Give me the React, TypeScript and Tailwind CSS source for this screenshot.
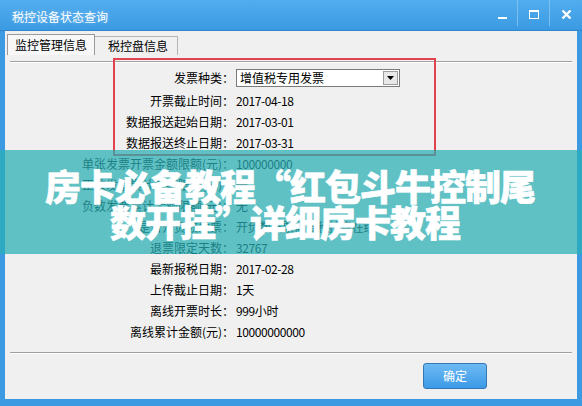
import React from 'react';

const rows: { label: string; value: string }[] = [
  { label: '开票截止时间：', value: '2017-04-18' },
  { label: '数据报送起始日期：', value: '2017-03-01' },
  { label: '数据报送终止日期：', value: '2017-03-31' },
  { label: '单张发票开票金额限额(元)：', value: '100000000' },
  { label: '正数发票累计金额限额(元)：', value: '无' },
  { label: '负数发票累计金额限额(元)：', value: '无' },
  { label: '是否开负数发票：', value: '开负数发票需要税控盘在线' },
  { label: '退票限定天数：', value: '32767' },
  { label: '最新报税日期：', value: '2017-02-28' },
  { label: '上传截止日期：', value: '1天' },
  { label: '离线开票时长：', value: '999小时' },
  { label: '离线累计金额(元)：', value: '10000000000' },
];

const TitleBar = () => (
  <div className="h-[31px] flex items-start bg-gradient-to-b from-[#52adef] to-[#3a9ae2] border-b border-[#2f86cc]">
    <div className="pl-[12px] pt-[9px] text-[12px] leading-[16px] text-white [text-shadow:0_0_4px_rgba(255,255,255,0.35)]">
      税控设备状态查询
    </div>
    <div className="ml-auto flex h-[26px]">
      <div className="w-[34px] flex items-center justify-center pl-[4px]">
        <div className="w-[9px] h-[2px] bg-white mt-[9px]" />
      </div>
      <div className="w-[1px] bg-[#7cc0f2]" />
      <div className="w-[31px] flex items-center justify-center">
        <div className="w-[10px] h-[9px] border border-white border-t-2 mt-[2px]" />
      </div>
      <div className="w-[1px] bg-[#7cc0f2]" />
      <div className="w-[32px] flex items-center justify-center pt-[2px]">
        <svg width="11" height="11" viewBox="0 0 11 11">
          <path d="M1.5 1.5 L9.5 9.5 M9.5 1.5 L1.5 9.5" stroke="white" strokeWidth="2.4" />
        </svg>
      </div>
    </div>
  </div>
);

export default function App() {
  return (
    <div className="relative w-[582px] h-[406px] overflow-hidden flex flex-col bg-[#3b9ae2] font-['Noto_Sans_CJK_SC',sans-serif] text-black">
      <TitleBar />
      <div className="mx-[5px] mb-[7px] flex-1 bg-[#f0f0f0] flex flex-col">
        {/* tabs */}
        <div className="flex pl-[2px] pt-[3px] h-[24px] items-end">
          <div className="h-[21px] w-[88px] bg-[#f7f7f7] border border-b-0 border-[#9a9a9a] flex items-center pl-[7px] text-[12px]">
            监控管理信息
          </div>
          <div className="h-[19px] w-[83px] border-r border-t border-[#b4b4b4] flex items-center pl-[13px] text-[12px]">
            税控盘信息
          </div>
        </div>
        <div className="mx-[5px] mt-[6px] h-[2px] border-t border-[#a0a0a0] border-b border-b-white" />

        {/* fields */}
        <div className="mt-[2px] grid grid-cols-[229px_1fr] text-[12px]">
          <div className="h-[25px] flex items-center justify-end">发票种类：</div>
          <div className="h-[25px] flex items-center pl-[2px]">
            <div className="w-[164px] h-[18px] bg-white border border-[#7a7a7a] flex items-center">
              <span className="pl-[3px] leading-none">增值税专用发票</span>
              <div className="ml-auto mr-[1px] w-[15px] h-[14px] bg-[#e8e8e8] border border-[#9c9c9c] flex items-center justify-center">
                <svg width="7" height="4" viewBox="0 0 7 4">
                  <path d="M0 0 H7 L3.5 4 Z" fill="black" />
                </svg>
              </div>
            </div>
          </div>
          {rows.map(r => (
            <React.Fragment key={r.label}>
              <div className="h-[21px] flex items-center justify-end whitespace-nowrap">{r.label}</div>
              <div className="h-[21px] flex items-center pl-[2px] tracking-[-0.4px]">{r.value}</div>
            </React.Fragment>
          ))}
        </div>

        <div className="mx-[5px] mt-[10px] h-[2px] border-t border-[#a0a0a0] border-b border-b-white" />

        <div className="flex justify-end pr-[90px] mt-[9px]">
          <button className="w-[64px] h-[26px] rounded-[3px] border border-[#3477b4] bg-gradient-to-b from-[#6cbaf3] to-[#3c9ae6] text-white text-[12px]">
            确定
          </button>
        </div>
      </div>

      {/* red annotation box */}
      <div className="absolute left-[113px] top-[58px] w-[323px] h-[98px] border-[2px] border-[#e0434e]" />

      {/* watermark band */}
      <div className="absolute left-0 top-[150px] w-full h-[104px] bg-[rgba(40,175,180,0.72)] flex flex-col items-center justify-center pt-[1px] text-white font-black text-[36px] leading-[36px] tracking-[-1px] [-webkit-text-stroke:0.6px_white]">
        <div className="-ml-[2px]">房卡必备教程“红包斗牛控制尾</div>
        <div className="-ml-[12px]">数开挂”详细房卡教程</div>
      </div>
    </div>
  );
}
